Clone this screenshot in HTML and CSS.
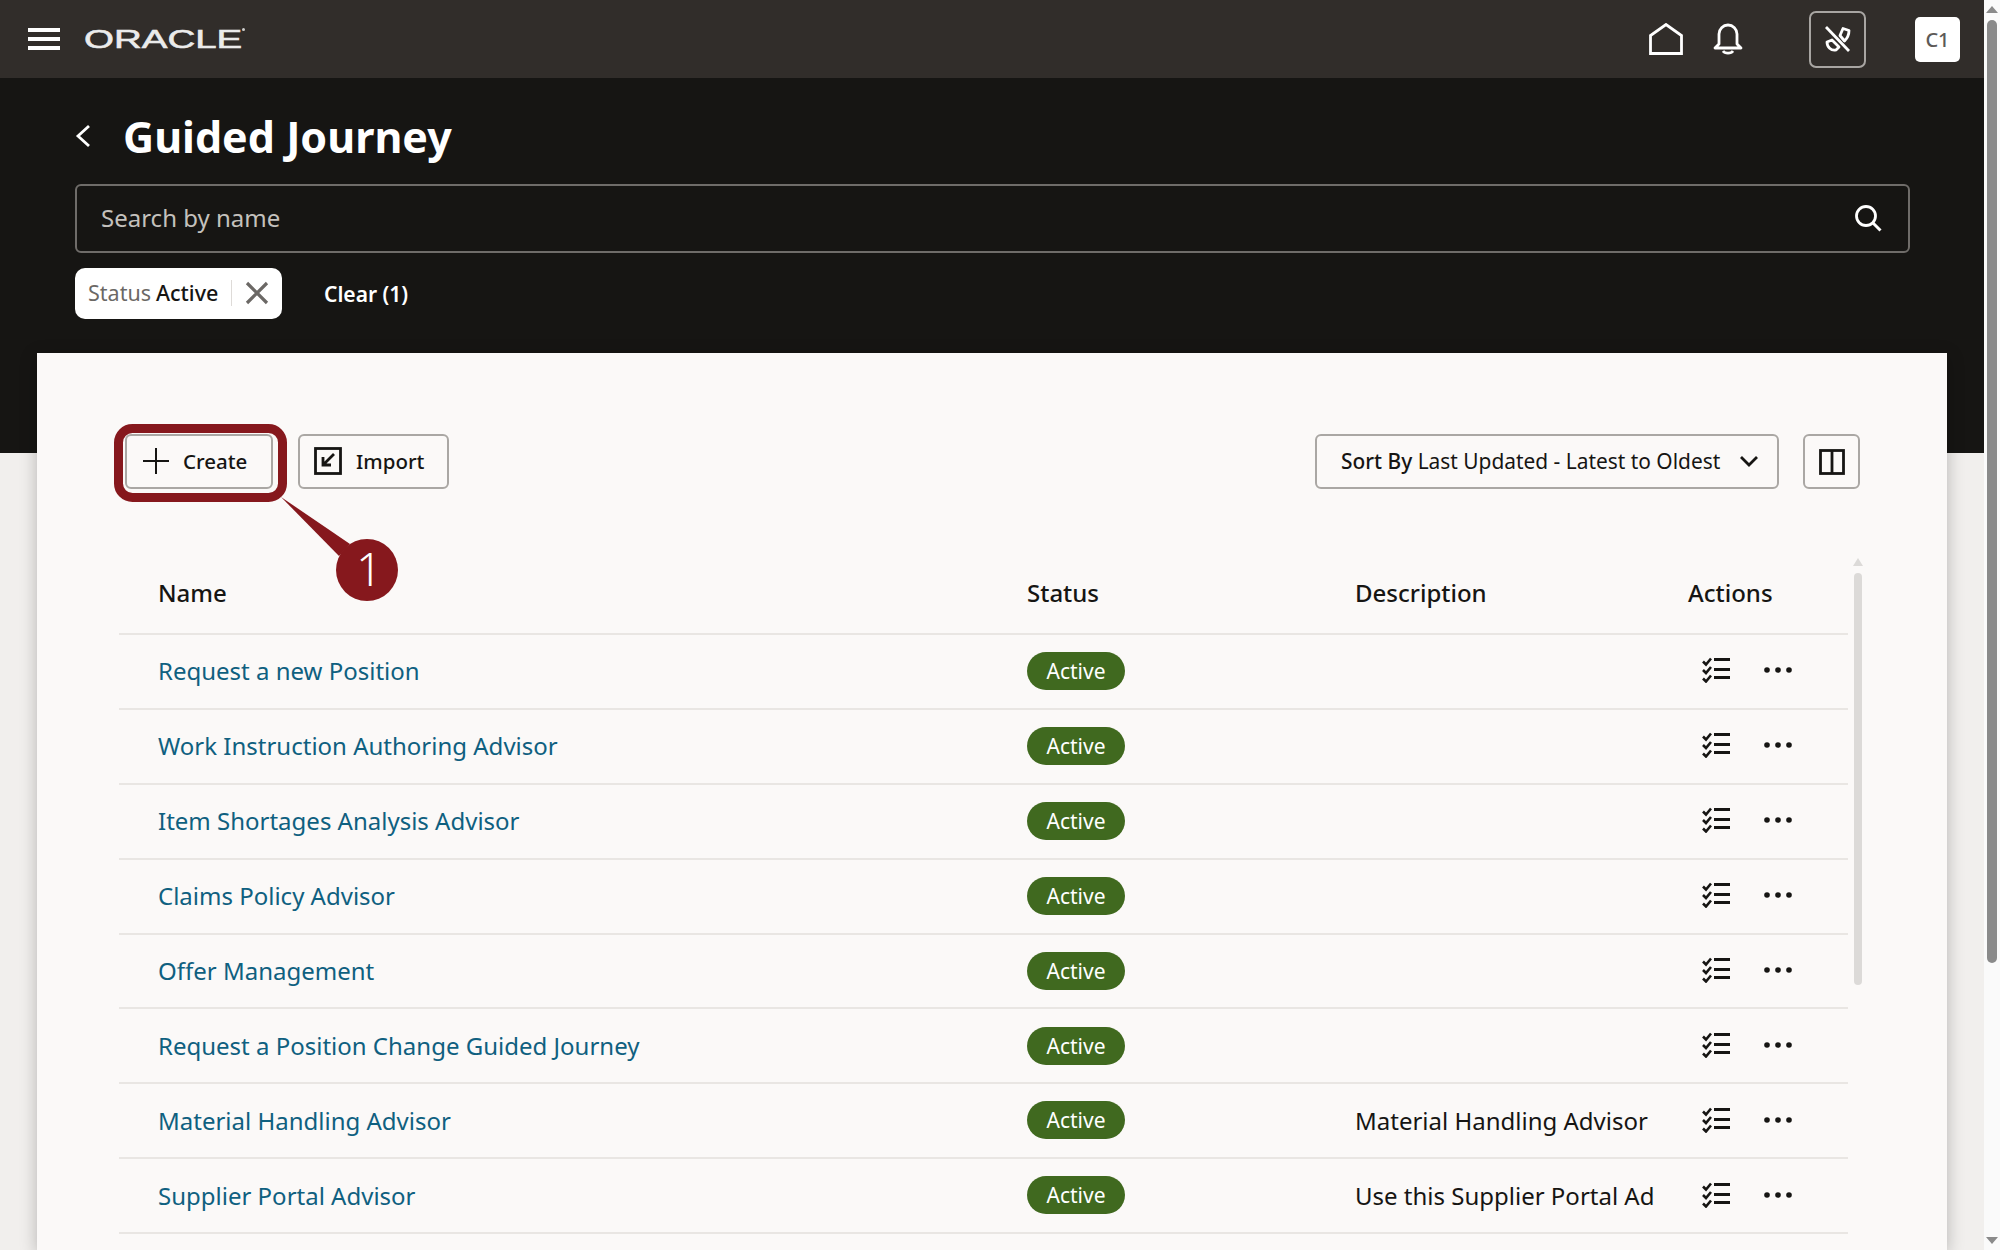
FILE: index.html
```html
<!DOCTYPE html>
<html lang="en">
<head>
    <meta charset="UTF-8">
    <meta name="viewport" content="width=device-width, initial-scale=1.0">
    <title>Guided Journey</title>
    <link rel="stylesheet" href="styles.css">
</head>
<body>
    <svg class="icon-defs" width="0" height="0">
        <symbol id="icon-checklist" viewBox="0 0 30 26">
            <path d="M2 4.5l3 3 5-6M2 13l3 3 5-6M2 21.500l3 3 5-6" fill="none" stroke="#161513" stroke-width="2.600"/>
            <path d="M13 2.500h16M13 12.500h16M13 20.500h16" fill="none" stroke="#161513" stroke-width="3"/>
        </symbol>
        <symbol id="icon-more" viewBox="0 0 28 6">
            <circle cx="3" cy="3" r="2.800" fill="#161513"/>
            <circle cx="14" cy="3" r="2.800" fill="#161513"/>
            <circle cx="25" cy="3" r="2.800" fill="#161513"/>
        </symbol>
    </svg>

    <div class="page">
        <header class="topbar">
            <button class="menu-button" aria-label="Menu">
                <span></span><span></span><span></span>
            </button>
            <div class="logo"><span class="logo-text">ORACLE</span><i class="logo-mark"></i></div>
            <div class="topbar-right">
                <svg class="top-icon" width="34" height="32" viewBox="0 0 34 32">
                    <path d="M1.500 30.500V12.500L17 1.500l15.500 11v18z" fill="none" stroke="#fff" stroke-width="2.800"/>
                </svg>
                <svg class="top-icon bell" width="30" height="32" viewBox="0 0 30 32">
                    <path d="M6 21V11a9 9 0 0 1 18 0v10l4 4H2z" fill="none" stroke="#fff" stroke-width="2.800" stroke-linejoin="round"/>
                    <path d="M10 28c2 2.800 8 2.800 10 0" fill="none" stroke="#fff" stroke-width="2.800"/>
                </svg>
                <button class="mute-button" aria-label="Voice off">
                    <svg width="28" height="28" viewBox="0 0 28 28">
                        <path d="M2 2l23 24" fill="none" stroke="#fff" stroke-width="2.800"/>
                        <path d="M19 3.500l6 2c0 4-2 8-4.500 10.500L16 10.500z" fill="none" stroke="#fff" stroke-width="2.800" stroke-linejoin="round"/>
                        <path d="M3 17l5-2 7 7-3 3c-5 1-9-3-9-8z" fill="none" stroke="#fff" stroke-width="2.800" stroke-linejoin="round"/>
                    </svg>
                </button>
                <div class="user-badge">C1</div>
            </div>
        </header>

        <section class="hero">
            <div class="title-row">
                <svg class="back-icon" width="16" height="24" viewBox="0 0 16 24">
                    <path d="M14 2L3 12l11 10" fill="none" stroke="#fff" stroke-width="2.800"/>
                </svg>
                <h1>Guided Journey</h1>
            </div>
            <div class="search-box">
                <span class="search-placeholder">Search by name</span>
                <svg width="28" height="28" viewBox="0 0 28 28">
                    <circle cx="12" cy="12" r="9.500" fill="none" stroke="#fff" stroke-width="2.800"/>
                    <path d="M18.500 18.500l8 8" fill="none" stroke="#fff" stroke-width="3"/>
                </svg>
            </div>
            <div class="filter-row">
                <div class="filter-chip">
                    <span class="chip-label">Status</span>
                    <span class="chip-value">Active</span>
                    <span class="chip-close">
                        <svg width="24" height="24" viewBox="0 0 24 24">
                            <path d="M2 2l20 20M22 2L2 22" fill="none" stroke="#6b6865" stroke-width="3.200"/>
                        </svg>
                    </span>
                </div>
                <span class="clear-link">Clear (1)</span>
            </div>
        </section>

        <main class="card">
            <div class="toolbar">
                <button class="btn create-btn">
                    <svg width="28" height="28" viewBox="0 0 28 28">
                        <path d="M14 1v26M1 14h26" fill="none" stroke="#161513" stroke-width="2"/>
                    </svg>
                    Create
                </button>
                <button class="btn import-btn">
                    <svg width="28" height="28" viewBox="0 0 28 28">
                        <rect x="1.500" y="1.500" width="25" height="25" fill="none" stroke="#161513" stroke-width="2.800"/>
                        <path d="M20 7L9 18M9 10v8h8" fill="none" stroke="#161513" stroke-width="2.800"/>
                    </svg>
                    Import
                </button>
                <button class="btn sort-btn">
                    <span class="sort-label"><b>Sort By</b> Last Updated - Latest to Oldest</span>
                    <svg width="20" height="12" viewBox="0 0 20 12">
                        <path d="M2 2l8 8 8-8" fill="none" stroke="#161513" stroke-width="2.800"/>
                    </svg>
                </button>
                <button class="btn columns-btn" aria-label="Columns">
                    <svg width="26" height="26" viewBox="0 0 26 26">
                        <rect x="1.500" y="1.500" width="23" height="23" fill="none" stroke="#161513" stroke-width="2.800"/>
                        <path d="M13 1.500v23" stroke="#161513" stroke-width="2.800"/>
                    </svg>
                </button>
            </div>

            <div class="table-wrap">
                <table class="journey-table">
                    <colgroup>
                        <col class="col-name">
                        <col class="col-status">
                        <col class="col-desc">
                        <col>
                    </colgroup>
                    <thead>
                        <tr>
                            <th class="name-cell">Name</th>
                            <th>Status</th>
                            <th>Description</th>
                            <th>Actions</th>
                        </tr>
                    </thead>
                    <tbody>
                        <tr>
                            <td class="name-cell"><a href="#">Request a new Position</a></td>
                            <td><span class="badge">Active</span></td>
                            <td></td>
                            <td class="actions"><svg class="check-icon"><use href="#icon-checklist"/></svg><svg class="more-icon"><use href="#icon-more"/></svg></td>
                        </tr>
                        <tr>
                            <td class="name-cell"><a href="#">Work Instruction Authoring Advisor</a></td>
                            <td><span class="badge">Active</span></td>
                            <td></td>
                            <td class="actions"><svg class="check-icon"><use href="#icon-checklist"/></svg><svg class="more-icon"><use href="#icon-more"/></svg></td>
                        </tr>
                        <tr>
                            <td class="name-cell"><a href="#">Item Shortages Analysis Advisor</a></td>
                            <td><span class="badge">Active</span></td>
                            <td></td>
                            <td class="actions"><svg class="check-icon"><use href="#icon-checklist"/></svg><svg class="more-icon"><use href="#icon-more"/></svg></td>
                        </tr>
                        <tr>
                            <td class="name-cell"><a href="#">Claims Policy Advisor</a></td>
                            <td><span class="badge">Active</span></td>
                            <td></td>
                            <td class="actions"><svg class="check-icon"><use href="#icon-checklist"/></svg><svg class="more-icon"><use href="#icon-more"/></svg></td>
                        </tr>
                        <tr>
                            <td class="name-cell"><a href="#">Offer Management</a></td>
                            <td><span class="badge">Active</span></td>
                            <td></td>
                            <td class="actions"><svg class="check-icon"><use href="#icon-checklist"/></svg><svg class="more-icon"><use href="#icon-more"/></svg></td>
                        </tr>
                        <tr>
                            <td class="name-cell"><a href="#">Request a Position Change Guided Journey</a></td>
                            <td><span class="badge">Active</span></td>
                            <td></td>
                            <td class="actions"><svg class="check-icon"><use href="#icon-checklist"/></svg><svg class="more-icon"><use href="#icon-more"/></svg></td>
                        </tr>
                        <tr>
                            <td class="name-cell"><a href="#">Material Handling Advisor</a></td>
                            <td><span class="badge">Active</span></td>
                            <td>Material Handling Advisor</td>
                            <td class="actions"><svg class="check-icon"><use href="#icon-checklist"/></svg><svg class="more-icon"><use href="#icon-more"/></svg></td>
                        </tr>
                        <tr>
                            <td class="name-cell"><a href="#">Supplier Portal Advisor</a></td>
                            <td><span class="badge">Active</span></td>
                            <td>Use this Supplier Portal Ad</td>
                            <td class="actions"><svg class="check-icon"><use href="#icon-checklist"/></svg><svg class="more-icon"><use href="#icon-more"/></svg></td>
                        </tr>
                    </tbody>
                </table>
                <div class="table-scrollbar">
                    <span class="table-arrow"></span>
                    <span class="table-thumb"></span>
                </div>
            </div>
        </main>
    </div>

    <aside class="page-scrollbar">
        <span class="arrow-up"></span>
        <span class="page-thumb"></span>
        <span class="arrow-down"></span>
    </aside>

    <!-- callout drawn over the Create button -->
    <svg class="callout" width="420" height="200" viewBox="100 415 420 200">
        <rect x="118.500" y="428.500" width="164" height="69" rx="14" fill="none" stroke="#86181d" stroke-width="9"/>
        <polygon points="281,497 350,544 339,556" fill="#86181d"/>
        <circle cx="367" cy="570" r="31" fill="#86181d"/>
        <text x="369" y="586" text-anchor="middle">1</text>
    </svg>
</body>
</html>
```

FILE: styles.css
```css
* {
    box-sizing: border-box;
}

body {
    font-family: 'Noto Sans', sans-serif;
    background: #f1efed;
    margin: 0;
    padding: 0;
    display: flex;
    height: 1250px;
    overflow: hidden;
    color: #161513;
}

button {
    font-family: inherit;
    cursor: pointer;
}

.icon-defs {
    position: absolute;
}

.page {
    width: 1984px;
    height: 1250px;
    display: flex;
    flex-direction: column;
    overflow: hidden;
}

.topbar {
    height: 78px;
    flex: none;
    background: #312d2a;
    display: flex;
    align-items: center;
    padding-left: 28px;
}

.menu-button {
    width: 32px;
    height: 22px;
    padding: 0;
    background: none;
    border: none;
    display: flex;
    flex-direction: column;
    justify-content: space-between;
}

.menu-button span {
    display: block;
    height: 4px;
    background: #fff;
}

.logo {
    width: 164px;
    margin-left: 24px;
    display: flex;
    align-items: flex-start;
    position: relative;
}

.logo-text {
    display: block;
    width: 107px;
    flex: none;
    font-family: 'Liberation Sans', sans-serif;
    font-size: 26px;
    line-height: 30px;
    color: #ebebeb;
    -webkit-text-stroke: 0.6px #ebebeb;
    transform: scaleX(1.48);
    transform-origin: left center;
}

.logo-mark {
    position: absolute;
    left: 158px;
    top: 4px;
    width: 3px;
    height: 3px;
    border-radius: 50%;
    background: #cfcfcf;
}

.topbar-right {
    margin-left: auto;
    display: flex;
    align-items: center;
    padding-right: 24px;
}

.top-icon {
    margin-right: 30px;
}

.top-icon.bell {
    margin-right: 66px;
}

.mute-button {
    width: 57px;
    height: 57px;
    background: none;
    border: 2px solid #a8a5a2;
    border-radius: 7px;
    padding: 0;
    display: flex;
    align-items: center;
    justify-content: center;
}

.user-badge {
    width: 45px;
    height: 45px;
    margin-left: 49px;
    background: #fff;
    border-radius: 5px;
    color: #5c5a58;
    font-size: 20px;
    font-weight: 500;
    display: flex;
    align-items: center;
    justify-content: center;
}

.hero {
    height: 375px;
    flex: none;
    background: #161513;
    padding: 0 74px 0 75px;
}

.title-row {
    height: 106px;
    display: flex;
    align-items: center;
    padding-top: 10px;
}

.back-icon {
    margin-right: 32px;
}

.title-row h1 {
    margin: 0;
    color: #fff;
    font-size: 43px;
    font-weight: 700;
}

.search-box {
    height: 69px;
    border: 2px solid #6f6c69;
    border-radius: 6px;
    display: flex;
    align-items: center;
    justify-content: space-between;
    padding: 0 26px 2px 24px;
}

.search-placeholder {
    color: #c4c1bd;
    font-size: 24px;
}

.filter-row {
    margin-top: 15px;
    display: flex;
    align-items: center;
}

.filter-chip {
    width: 207px;
    height: 51px;
    background: #fff;
    border-radius: 10px;
    display: flex;
    align-items: center;
    padding: 0 0 2px 13px;
    font-size: 21.500px;
}

.chip-label {
    color: #6b6865;
}

.chip-value {
    margin-left: 5px;
    font-weight: 500;
    color: #161513;
}

.chip-close {
    margin-left: 13px;
    padding-left: 13px;
    border-left: 1px solid #dedbd8;
    height: 26px;
    display: flex;
    align-items: center;
}

.clear-link {
    margin-left: 42px;
    color: #fff;
    font-size: 21px;
    font-weight: 600;
}

.card {
    flex: 1;
    margin: -100px 37px 0;
    padding: 81px 85px 0 82px;
    background: #fbf9f8;
    box-shadow: 0 4px 16px rgba(0, 0, 0, 0.25);
    position: relative;
}

.toolbar {
    height: 55px;
    display: flex;
    padding: 0 2px 0 6px;
}

.btn {
    height: 55px;
    background: #fbf9f8;
    border: 2px solid #aaa7a4;
    border-radius: 6px;
    color: #161513;
    font-size: 20.500px;
    font-weight: 500;
    display: flex;
    align-items: center;
    padding: 0 0 2px;
}

.create-btn {
    width: 148px;
    padding-left: 15px;
    gap: 13px;
}

.import-btn {
    width: 151px;
    margin-left: 25px;
    padding-left: 14px;
    gap: 14px;
}

.sort-btn {
    width: 464px;
    margin-left: auto;
    padding: 0 18px 2px 24px;
    justify-content: space-between;
    font-size: 20.900px;
    font-weight: 400;
}

.sort-label {
    white-space: nowrap;
}

.sort-btn b {
    font-weight: 500;
}

.columns-btn {
    width: 57px;
    margin-left: 24px;
    padding: 0;
    justify-content: center;
}

.table-wrap {
    margin-top: 66px;
    display: flex;
    justify-content: space-between;
}

.journey-table {
    width: 1729px;
    table-layout: fixed;
    border-collapse: collapse;
    font-size: 24px;
}

.col-name {
    width: 908px;
}

.col-status {
    width: 328px;
}

.col-desc {
    width: 333px;
}

.journey-table th {
    height: 79px;
    padding: 0 0 4px;
    text-align: left;
    font-size: 24px;
    font-weight: 500;
    border-bottom: 2px solid #e9e6e3;
}

.journey-table td {
    height: 74.875px;
    padding: 0 0 1px;
    white-space: nowrap;
    border-bottom: 2px solid #e9e6e3;
}

.journey-table .name-cell {
    padding-left: 39px;
}

.journey-table a {
    color: #0f6080;
    text-decoration: none;
}

.badge {
    display: inline-flex;
    align-items: center;
    justify-content: center;
    width: 98px;
    height: 38px;
    vertical-align: middle;
    border-radius: 19px;
    background: #40691f;
    color: #fff;
    font-size: 21px;
}

.journey-table .actions {
    padding: 0 0 2px 13px;
    font-size: 0;
}

.check-icon {
    width: 30px;
    height: 26px;
    vertical-align: middle;
}

.more-icon {
    width: 28px;
    height: 6px;
    margin-left: 33px;
    vertical-align: middle;
}

.table-scrollbar {
    width: 8px;
    display: flex;
    flex-direction: column;
    align-items: center;
    padding-top: 3px;
}

.table-arrow {
    width: 0;
    height: 0;
    border-left: 5px solid transparent;
    border-right: 5px solid transparent;
    border-bottom: 8px solid #dcdad8;
}

.table-thumb {
    width: 8px;
    height: 412px;
    margin-top: 7px;
    border-radius: 4px;
    background: #dcdad8;
}

.page-scrollbar {
    width: 16px;
    height: 1250px;
    flex: none;
    background: #fafafa;
    display: flex;
    flex-direction: column;
    align-items: center;
    padding: 6px 0;
}

.arrow-up,
.arrow-down {
    width: 0;
    height: 0;
    border-left: 6px solid transparent;
    border-right: 6px solid transparent;
}

.arrow-up {
    border-bottom: 7px solid #8a8a8a;
}

.arrow-down {
    margin-top: auto;
    border-top: 7px solid #8a8a8a;
}

.page-thumb {
    width: 10px;
    height: 943px;
    margin-top: 7px;
    border-radius: 5px;
    background: #8a8a8a;
}

.callout {
    position: absolute;
    left: 100px;
    top: 415px;
}

.callout text {
    font-family: 'Noto Sans', sans-serif;
    font-size: 45px;
    font-weight: 300;
    fill: #fff;
}
```
